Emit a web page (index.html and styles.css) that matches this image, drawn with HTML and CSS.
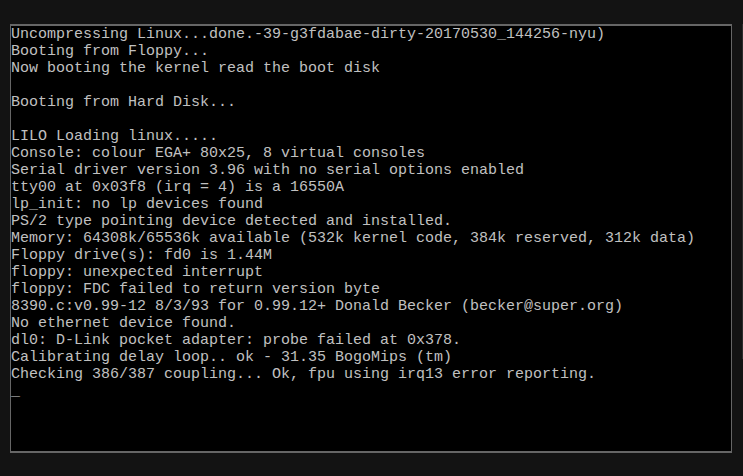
FILE: index.html
```html
<!DOCTYPE html>
<html>
<head>
<meta charset="utf-8">
<link rel="stylesheet" href="styles.css">
</head>
<body>
<div class="page">
<div class="console"><pre class="screen">Uncompressing Linux...done.-39-g3fdabae-dirty-20170530_144256-nyu)
Booting from Floppy...
Now booting the kernel read the boot disk

Booting from Hard Disk...

LILO Loading linux.....
Console: colour EGA+ 80x25, 8 virtual consoles
Serial driver version 3.96 with no serial options enabled
tty00 at 0x03f8 (irq = 4) is a 16550A
lp_init: no lp devices found
PS/2 type pointing device detected and installed.
Memory: 64308k/65536k available (532k kernel code, 384k reserved, 312k data)
Floppy drive(s): fd0 is 1.44M
floppy: unexpected interrupt
floppy: FDC failed to return version byte
8390.c:v0.99-12 8/3/93 for 0.99.12+ Donald Becker (becker@super.org)
No ethernet device found.
dl0: D-Link pocket adapter: probe failed at 0x378.
Calibrating delay loop.. ok - 31.35 BogoMips (tm)
Checking 386/387 coupling... Ok, fpu using irq13 error reporting.
<span class="cursor">_</span></pre></div>
<div class="scroll-edge"></div>
</div>
</body>
</html>
```
FILE: styles.css
```css
html, body {
  margin: 0;
  padding: 0;
  background: #131313;
  width: 743px;
  height: 476px;
  overflow: hidden;
}
.page {
  position: relative;
  padding: 24px 0 0 10px;
  width: 733px;
  height: 452px;
}
.console {
  width: 720px;
  height: 425px;
  background: #000;
  border-style: solid;
  border-color: #666;
  border-width: 2px 1px 2px 1px;
}
.screen {
  margin: 0;
  padding: 0;
  font-family: "Liberation Mono", "Courier New", monospace;
  font-size: 15px;
  line-height: 17px;
  color: #c0c0c0;
  white-space: pre;
}
.cursor {
  color: #d0d0d0;
}
.scroll-edge {
  position: absolute;
  left: 742px;
  top: 24px;
  width: 1px;
  height: 335px;
  background: #2c2c2c;
}
```
